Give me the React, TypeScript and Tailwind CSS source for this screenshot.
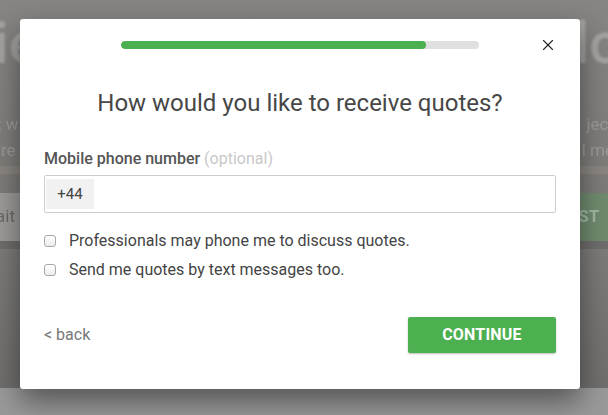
import { X } from "lucide-react";

function BackgroundPage() {
  return (
    <div className="absolute inset-0 overflow-hidden bg-[#7f7d7a]">
      <div className="flex h-[388px] flex-col bg-gradient-to-b from-[#878583] via-[#7d7b78] to-[#777573]">
        {/* Hero headline, only its edges peek out around the modal */}
        <div className="flex h-[78px] items-center justify-between pt-2 text-[58px] font-medium leading-none text-[#a3a29f] blur-[1px]">
          <span className="-ml-[6px]">ie</span>
          <span className="-mr-[14px]">do</span>
        </div>
        <div className="mt-[33px] flex justify-between text-[17px] leading-[26px] text-[#9c9a97] blur-[0.6px]">
          <div className="-ml-[4px] flex flex-col">
            <span>t w</span>
            <span className="pl-[5px]">re</span>
          </div>
          <div className="-mr-[6px] flex flex-col items-end">
            <span>ject</span>
            <span>l me</span>
          </div>
        </div>
        <div className="mt-[3px] h-[8px] bg-[#8a8580]" />
        <div className="mt-[19px] flex h-[48px] items-stretch justify-between">
          <div className="flex w-[24px] items-center bg-[#9b9a98] text-[17px] text-[#6a6967]">
            <span className="-ml-[4px] blur-[0.5px]">ait</span>
          </div>
          <div className="flex w-[34px] items-center bg-[#6f8b6f] text-[17px] font-bold text-[#a3b8a3]">
            <span className="-ml-[10px] blur-[0.5px]">T ST</span>
          </div>
        </div>
        <div className="h-[8px] bg-[#6e6d6b]" />
        <div className="flex-1 bg-gradient-to-b from-[#7c7b79] to-[#6f6e6c]" />
      </div>
      <div className="h-[27px] bg-[#999999]" />
    </div>
  );
}

function Checkbox({ label }: { label: string }) {
  return (
    <label className="flex items-center gap-[13px]">
      <span className="h-[12px] w-[12px] rounded-[3px] border border-[#a8a8a8] bg-gradient-to-b from-white to-[#ececec]" />
      <span className="text-[16px] leading-[19px] text-[#444]">{label}</span>
    </label>
  );
}

export default function App() {
  return (
    <div
      className="relative h-[415px] w-[608px] overflow-hidden"
      style={{ fontFamily: "Roboto, 'Liberation Sans', sans-serif" }}
    >
      <BackgroundPage />

      <div className="relative flex pl-[20px] pt-[19px]">
        <div className="flex h-[370px] w-[560px] flex-col rounded-[3px] bg-white px-[24px] shadow-[0_12px_28px_rgba(0,0,0,0.45)]">
          {/* Progress + close */}
          <div className="flex h-[50px] items-center pt-[1px]">
            <div className="ml-[77px] h-[8px] w-[358px] overflow-hidden rounded-full bg-[#e0e0e0]">
              <div className="h-full w-[305px] rounded-full bg-[#4caf50]" />
            </div>
            <button type="button" className="ml-auto mr-[-1px] text-[#222]" aria-label="Close">
              <X size={18} strokeWidth={1.5} />
            </button>
          </div>

          <h2 className="mt-[19px] text-center text-[24px] leading-[30px] text-[#474747]">
            How would you like to receive quotes?
          </h2>

          <div className="mt-[32px] text-[16px] leading-[18px]">
            <span className="font-medium text-[#555]">Mobile phone number</span>{" "}
            <span className="text-[#c8c8c8]">(optional)</span>
          </div>

          <div className="mt-[7px] flex h-[38px] items-stretch rounded-[2px] border border-[#cccccc] p-[3px] pl-[1px]">
            <div className="flex w-[48px] items-center justify-center bg-[#f1f1f1] text-[15px] text-[#444]">
              +44
            </div>
            <input className="flex-1 bg-transparent outline-none" />
          </div>

          <div className="mt-[18px] flex flex-col gap-[10px]">
            <Checkbox label="Professionals may phone me to discuss quotes." />
            <Checkbox label="Send me quotes by text messages too." />
          </div>

          <div className="mt-[38px] flex items-center justify-between">
            <a className="text-[16px] text-[#777]">&lt; back</a>
            <button
              type="button"
              className="h-[36px] w-[148px] rounded-[2px] bg-[#4caf50] text-[16px] font-bold tracking-[0.2px] text-white shadow-[0_1px_2px_rgba(0,0,0,0.25)]"
            >
              CONTINUE
            </button>
          </div>
        </div>
      </div>
    </div>
  );
}
